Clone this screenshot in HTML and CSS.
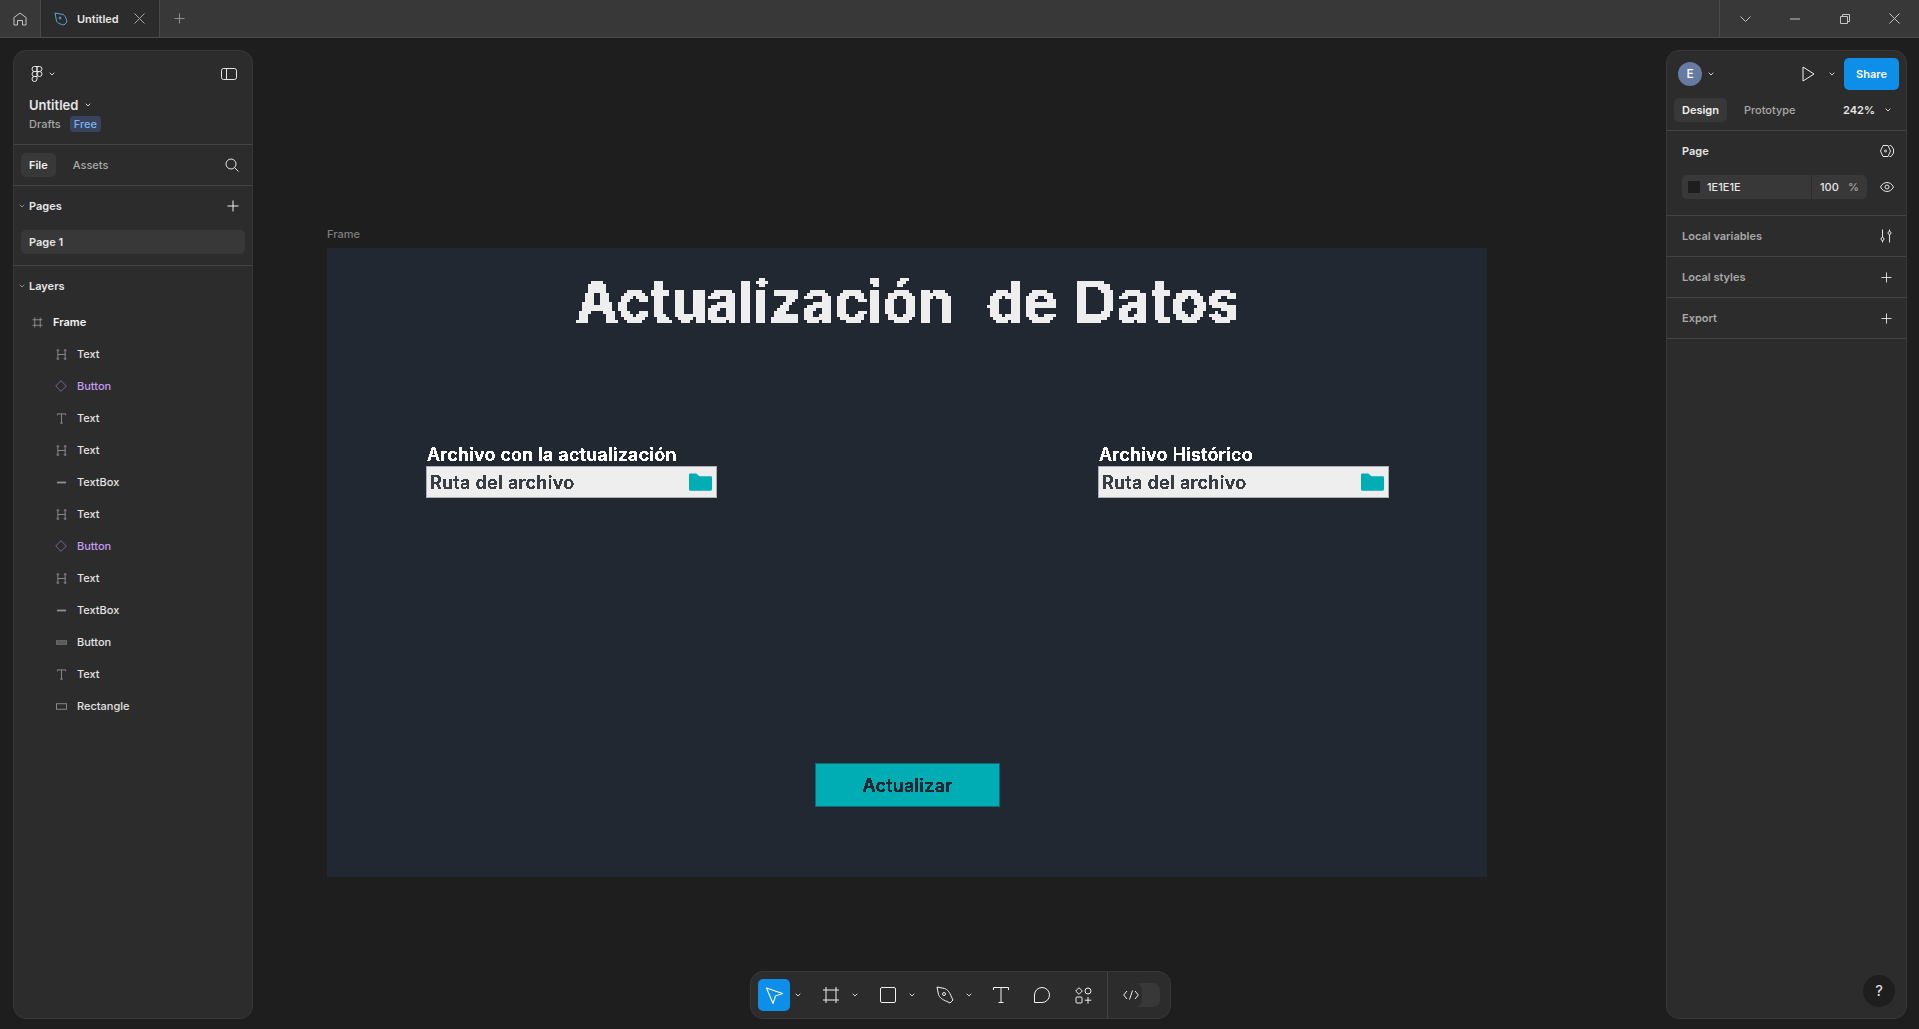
FILE: index.html
```html
<!DOCTYPE html>
<html lang="en">
<head>
    <meta charset="UTF-8">
    <meta name="viewport" content="width=device-width, initial-scale=1.0">
    <title>Untitled - Figma</title>
    <link rel="stylesheet" href="styles.css">
</head>
<body>
    <!-- icon sprite and the pixel font filters -->
    <svg class="sprite" width="0" height="0">
        <defs>
            <filter id="pixel-big" x="0" y="0" width="100%" height="100%" color-interpolation-filters="sRGB">
                <feFlood x="1" y="1" width="1" height="1" flood-color="#000"/>
                <feComposite width="3" height="3"/>
                <feTile result="grid"/>
                <feComposite in="SourceGraphic" in2="grid" operator="in"/>
                <feMorphology operator="dilate" radius="1"/>
                <feComponentTransfer>
                    <feFuncA type="discrete" tableValues="0 1 1 1"/>
                </feComponentTransfer>
            </filter>
            <filter id="pixel-small" x="0" y="0" width="100%" height="100%" color-interpolation-filters="sRGB">
                <feComponentTransfer>
                    <feFuncA type="discrete" tableValues="0 1 1 1"/>
                </feComponentTransfer>
            </filter>
            <symbol id="caret" viewBox="0 0 6 4"><path d="M.7.7 3 3l2.3-2.3" fill="none" stroke="currentColor"/></symbol>
            <symbol id="plus" viewBox="0 0 12 12"><path d="M6 .5v11M.5 6h11" fill="none" stroke="currentColor"/></symbol>
            <symbol id="i-frame" viewBox="0 0 12 12"><path d="M3 .5v11M9 .5v11M.5 3h11M.5 9h11" fill="none" stroke="currentColor"/></symbol>
            <symbol id="i-auto" viewBox="0 0 12 12" fill="none" stroke="currentColor"><path d="M2 2.500v7M10 2.500v7M2 6h8"/><circle cx="2" cy="1.500" r="1"/><circle cx="10" cy="1.500" r="1"/><circle cx="2" cy="10.500" r="1"/><circle cx="10" cy="10.500" r="1"/></symbol>
            <symbol id="i-comp" viewBox="0 0 12 12"><path d="M6 .7 11.300 6 6 11.300.7 6z" fill="none" stroke="currentColor"/></symbol>
            <symbol id="i-text" viewBox="0 0 12 12"><path d="M1.500 2.500v-1.500h9v1.500M6 1v10M4.500 11h3" fill="none" stroke="currentColor"/></symbol>
            <symbol id="i-line" viewBox="0 0 12 12"><path d="M1 5h10v2H1z" fill="currentColor"/></symbol>
            <symbol id="i-btn" viewBox="0 0 12 12"><rect x=".5" y="4" width="11" height="4" fill="#5a5a5a" stroke="#6e6e6e"/></symbol>
            <symbol id="i-rect" viewBox="0 0 12 12"><rect x=".5" y="3" width="11" height="6" fill="none" stroke="currentColor"/></symbol>
        </defs>
    </svg>

    <header class="topbar">
        <div class="home-tab">
            <svg width="14" height="14" viewBox="0 0 14 14" fill="none" stroke="currentColor"><path d="M1 13V5.500L7 1l6 4.500V13H9.500V8.500h-5V13z" stroke-linejoin="round"/></svg>
        </div>
        <div class="file-tab">
            <svg class="nib" width="14" height="14" viewBox="0 0 14 14" fill="none" stroke="currentColor"><path d="M1 1 9 2.500c2 1 3 3 4 7.500l-3 3c-4.500-1-6.500-2-7.500-4z" stroke-linejoin="round"/><circle cx="6" cy="6" r="1"/></svg>
            <span class="tab-name">Untitled</span>
            <svg class="tab-close" width="11" height="11" viewBox="0 0 11 11"><path d="M.5.5l10 10M10.500.5l-10 10" stroke="currentColor" fill="none"/></svg>
        </div>
        <div class="new-tab"><svg width="11" height="11"><use href="#plus"/></svg></div>
        <div class="window-btns">
            <div class="win-btn"><svg width="11" height="6" viewBox="0 0 11 6"><path d="M.5.5 5.500 5.500l5-5" fill="none" stroke="currentColor"/></svg></div>
            <div class="win-btn"><svg width="10" height="2" viewBox="0 0 10 2"><path d="M0 1h10" stroke="currentColor"/></svg></div>
            <div class="win-btn"><svg width="10" height="10" viewBox="0 0 10 10" fill="none" stroke="currentColor"><path d="M.5 2.500h7v7h-7zM2.500 2.500v-2h7v7h-2"/></svg></div>
            <div class="win-btn"><svg width="11" height="11" viewBox="0 0 11 11"><path d="M.5.5l10 10M10.500.5l-10 10" stroke="currentColor" fill="none"/></svg></div>
        </div>
    </header>

    <main class="workspace">
        <aside class="panel left-panel">
            <div class="file-head">
                <div class="logo-row">
                    <div class="logo">
                        <svg width="12" height="16" viewBox="0 0 12 16" fill="none" stroke="currentColor"><path d="M6 .5H3.500a2.500 2.500 0 0 0 0 5H6zM6 .5h2.500a2.500 2.500 0 0 1 0 5H6zM6 5.500H3.500a2.500 2.500 0 0 0 0 5H6z"/><circle cx="8.500" cy="8" r="2.500"/><path d="M3.500 10.500H6V13a2.500 2.500 0 1 1-2.500-2.500z"/></svg>
                        <svg class="caret" width="6" height="4"><use href="#caret"/></svg>
                    </div>
                    <svg width="16" height="12" viewBox="0 0 16 12" fill="none" stroke="currentColor"><rect x=".5" y=".5" width="15" height="11" rx="2"/><path d="M5.500.5v11"/></svg>
                </div>
                <div class="file-title">Untitled <svg class="caret" width="6" height="4"><use href="#caret"/></svg></div>
                <div class="file-meta"><span>Drafts</span><span class="badge">Free</span></div>
            </div>

            <div class="tabs-row">
                <span class="tab active">File</span>
                <span class="tab">Assets</span>
                <svg class="search" width="14" height="14" viewBox="0 0 14 14" fill="none" stroke="currentColor"><circle cx="6" cy="6" r="5"/><path d="M9.500 9.500 13.500 13.500"/></svg>
            </div>

            <section class="pages">
                <div class="section-head">
                    <svg class="fold" width="6" height="4"><use href="#caret"/></svg>
                    <span>Pages</span>
                    <svg class="head-plus" width="12" height="12"><use href="#plus"/></svg>
                </div>
                <div class="page-row">Page 1</div>
            </section>

            <section class="layers">
                <div class="section-head">
                    <svg class="fold" width="6" height="4"><use href="#caret"/></svg>
                    <span>Layers</span>
                </div>
                <ul class="layer-list">
                    <li class="layer root"><svg width="11" height="11"><use href="#i-frame"/></svg><span>Frame</span></li>
                    <li class="layer"><svg width="11" height="11"><use href="#i-auto"/></svg><span>Text</span></li>
                    <li class="layer purple"><svg width="12" height="12"><use href="#i-comp"/></svg><span>Button</span></li>
                    <li class="layer"><svg width="11" height="11"><use href="#i-text"/></svg><span>Text</span></li>
                    <li class="layer"><svg width="11" height="11"><use href="#i-auto"/></svg><span>Text</span></li>
                    <li class="layer"><svg width="11" height="11"><use href="#i-line"/></svg><span>TextBox</span></li>
                    <li class="layer"><svg width="11" height="11"><use href="#i-auto"/></svg><span>Text</span></li>
                    <li class="layer purple"><svg width="12" height="12"><use href="#i-comp"/></svg><span>Button</span></li>
                    <li class="layer"><svg width="11" height="11"><use href="#i-auto"/></svg><span>Text</span></li>
                    <li class="layer"><svg width="11" height="11"><use href="#i-line"/></svg><span>TextBox</span></li>
                    <li class="layer"><svg width="11" height="11"><use href="#i-btn"/></svg><span>Button</span></li>
                    <li class="layer"><svg width="11" height="11"><use href="#i-text"/></svg><span>Text</span></li>
                    <li class="layer"><svg width="11" height="11"><use href="#i-rect"/></svg><span>Rectangle</span></li>
                </ul>
            </section>
        </aside>

        <div class="canvas">
            <div class="frame-label">Frame</div>
            <div class="frame">
                <h1 class="frame-title"><span class="title-word">Actualización</span>&nbsp; de Datos</h1>
                <div class="fields">
                    <div class="field">
                        <label class="field-label">Archivo con la actualización</label>
                        <div class="field-box">
                            <span class="field-text">Ruta del archivo</span>
                            <svg width="23" height="18" viewBox="0 0 24 18"><path d="M0 1.500C0 .500.500 0 1.500 0h6L11 3h11.500c1 0 1.500.5 1.500 1.500v12c0 1-.5 1.500-1.500 1.500h-21C.5 18 0 17.500 0 16.500z" fill="#00adb5"/></svg>
                        </div>
                    </div>
                    <div class="field">
                        <label class="field-label">Archivo Histórico</label>
                        <div class="field-box">
                            <span class="field-text">Ruta del archivo</span>
                            <svg width="23" height="18" viewBox="0 0 24 18"><path d="M0 1.500C0 .500.500 0 1.500 0h6L11 3h11.500c1 0 1.500.5 1.500 1.500v12c0 1-.5 1.500-1.500 1.500h-21C.5 18 0 17.500 0 16.500z" fill="#00adb5"/></svg>
                        </div>
                    </div>
                </div>
                <div class="update-btn"><span>Actualizar</span></div>
            </div>
        </div>

        <aside class="panel right-panel">
            <div class="share-row">
                <div class="avatar">E</div>
                <svg class="caret avatar-caret" width="6" height="4"><use href="#caret"/></svg>
                <svg class="play" width="13" height="16" viewBox="0 0 13 16"><path d="M1 1 12 8 1 15z" fill="none" stroke="currentColor" stroke-linejoin="round"/></svg>
                <svg class="caret play-caret" width="6" height="4"><use href="#caret"/></svg>
                <div class="share-btn">Share</div>
            </div>
            <div class="design-row">
                <span class="tab active">Design</span>
                <span class="tab">Prototype</span>
                <span class="zoom-value">242%</span>
                <svg class="caret" width="6" height="4"><use href="#caret"/></svg>
            </div>
            <section class="page-section">
                <div class="prop-head">
                    <span>Page</span>
                    <svg width="14" height="12" viewBox="0 0 14 12" fill="none" stroke="currentColor"><path d="M3 .5h5l2.500 5.500L8 11.500H3L.5 6z"/><path d="M9.500.5H11L13.500 4v4L11 11.500H9.500"/><circle cx="5.500" cy="6" r="1"/></svg>
                </div>
                <div class="fill-row">
                    <div class="fill-input">
                        <div class="fill-color"><span class="swatch"></span>1E1E1E</div>
                        <div class="fill-opacity"><span>100</span><span class="pct">%</span></div>
                    </div>
                    <svg width="14" height="10" viewBox="0 0 14 10" fill="none" stroke="currentColor"><path d="M.5 5C2 2 4.500.5 7 .5S12 2 13.500 5C12 8 9.500 9.500 7 9.500S2 8 .5 5z"/><circle cx="7" cy="5" r="2"/></svg>
                </div>
            </section>
            <div class="prop-row">
                <span>Local variables</span>
                <svg width="12" height="14" viewBox="0 0 12 14" fill="none" stroke="currentColor"><path d="M2.500.5v8M9.500 5.500v8M2.500 11.500v2M9.500.5v2"/><circle cx="2.500" cy="10" r="1.500"/><circle cx="9.500" cy="4" r="1.500"/></svg>
            </div>
            <div class="prop-row">
                <span>Local styles</span>
                <svg width="11" height="11"><use href="#plus"/></svg>
            </div>
            <div class="prop-row">
                <span>Export</span>
                <svg width="11" height="11"><use href="#plus"/></svg>
            </div>
            <div class="help-btn">?</div>
        </aside>

        <nav class="toolbar">
            <div class="tool selected">
                <svg width="20" height="20" viewBox="0 0 20 20"><path d="M2.500 3 18.500 8.500 11.500 11 9 18.500z" fill="none" stroke="currentColor" stroke-linejoin="round" stroke-width="1.100"/></svg>
            </div>
            <svg class="tool-caret" width="6" height="4"><use href="#caret"/></svg>
            <div class="tool"><svg width="16" height="16" viewBox="0 0 16 16"><path d="M3 0v16M13 0v16M0 3h16M0 13h16" fill="none" stroke="currentColor"/></svg></div>
            <svg class="tool-caret" width="6" height="4"><use href="#caret"/></svg>
            <div class="tool"><svg width="16" height="16" viewBox="0 0 16 16"><rect x=".5" y=".5" width="15" height="15" rx="1.500" fill="none" stroke="currentColor"/></svg></div>
            <svg class="tool-caret" width="6" height="4"><use href="#caret"/></svg>
            <div class="tool"><svg width="18" height="18" viewBox="0 0 18 18" fill="none" stroke="currentColor"><path d="M1 1l7.500 1.500c3 1 5 3.500 7 8.500l1.500 3-3 3-3-1.500c-5-2-7.500-4-8.500-7z" stroke-linejoin="round"/><circle cx="8" cy="8" r="1.500"/></svg></div>
            <svg class="tool-caret last" width="6" height="4"><use href="#caret"/></svg>
            <div class="tool"><svg width="16" height="16" viewBox="0 0 16 16"><path d="M.5 3V.5h15V3M8 .5v15M5.500 15.500h5" fill="none" stroke="currentColor"/></svg></div>
            <div class="tool"><svg width="16" height="16" viewBox="0 0 16 16"><path d="M8 .5a7.500 7.500 0 0 1 0 15H.5V8A7.500 7.500 0 0 1 8 .5z" fill="none" stroke="currentColor"/></svg></div>
            <div class="tool"><svg width="17" height="17" viewBox="0 0 17 17" fill="none" stroke="currentColor"><path d="M4 .7 7.300 4 4 7.300.7 4z"/><circle cx="13" cy="4" r="3"/><rect x="1" y="10" width="6" height="6" rx="1"/><path d="M13 10v6.500M9.800 13.200h6.500"/></svg></div>
            <div class="dev-section">
                <div class="dev-toggle">
                    <div class="dev-knob"><svg width="16" height="10" viewBox="0 0 16 10"><path d="M4 1 .7 5 4 9M12 1l3.300 4L12 9M9.500.5l-3 9" fill="none" stroke="currentColor"/></svg></div>
                </div>
            </div>
        </nav>
    </main>
</body>
</html>
```

FILE: styles.css
```css
* {
    box-sizing: border-box;
}
html, body {
    height: 100%;
}
body {
    margin: 0;
    display: flex;
    flex-direction: column;
    overflow: hidden;
    background: #1e1e1e;
    color: #e6e6e6;
    font-family: Inter, "Liberation Sans", sans-serif;
    font-size: 11px;
    font-weight: 500;
}
svg {
    display: block;
    flex: none;
}
.sprite {
    position: absolute;
}
.caret {
    color: #d0d0d0;
}

/* top bar */
.topbar {
    display: flex;
    height: 38px;
    flex: none;
    background: #383838;
    border-bottom: 1px solid #4a4a4a;
    color: #c4c4c4;
}
.home-tab {
    width: 41px;
    display: flex;
    align-items: center;
    justify-content: center;
    border-right: 1px solid #4a4a4a;
}
.file-tab {
    width: 119px;
    display: flex;
    align-items: center;
    padding: 0 14px 0 13px;
    background: #2c2c2c;
    border-right: 1px solid #4a4a4a;
}
.nib {
    color: #5aa5dd;
}
.tab-name {
    margin-left: 9px;
    color: #e6e6e6;
    font-weight: 600;
}
.tab-close {
    margin-left: auto;
    color: #a8a8a8;
}
.new-tab {
    width: 38px;
    display: flex;
    align-items: center;
    justify-content: center;
    color: #969696;
}
.window-btns {
    margin-left: auto;
    display: flex;
    width: 200px;
    padding-left: 1px;
    border-left: 1px solid #4a4a4a;
}
.win-btn {
    flex: 1;
    display: flex;
    align-items: center;
    justify-content: center;
}

/* workspace */
.workspace {
    position: relative;
    flex: 1;
    display: flex;
    padding: 12px 12px 10px 13px;
    min-height: 0;
}
.panel {
    flex: none;
    display: flex;
    flex-direction: column;
    background: #2c2c2c;
    border: 1px solid #383838;
    border-radius: 13px;
    overflow: hidden;
}
.left-panel {
    width: 240px;
}
.right-panel {
    width: 241px;
}

/* left panel */
.file-head {
    height: 94px;
    padding: 14px 15px 0;
    border-bottom: 1px solid #444;
}
.logo-row {
    display: flex;
    align-items: center;
    justify-content: space-between;
    height: 18px;
}
.logo {
    display: flex;
    align-items: center;
    gap: 6px;
    padding-left: 2px;
}
.file-title {
    display: flex;
    align-items: center;
    gap: 7px;
    margin-top: 14px;
    height: 16px;
    font-size: 13px;
    font-weight: 600;
}
.file-meta {
    display: flex;
    align-items: center;
    gap: 9px;
    margin-top: 3px;
    color: #a6a6a6;
}
.badge {
    padding: 1px 4px;
    height: 16px;
    line-height: 14px;
    border-radius: 4px;
    background: #394360;
    color: #7cb3ee;
}
.tabs-row {
    display: flex;
    align-items: center;
    height: 41px;
    padding: 0 13px 0 7px;
    border-bottom: 1px solid #444;
}
.tab {
    height: 24px;
    line-height: 24px;
    padding: 0 8px;
    border-radius: 5px;
    color: #a8a8a8;
}
.tab.active {
    background: #383838;
    color: #f0f0f0;
    font-weight: 600;
}
.tabs-row .tab + .tab {
    margin-left: 9px;
}
.search {
    margin-left: auto;
}
.pages {
    height: 80px;
    padding: 8px 0 0;
    border-bottom: 1px solid #444;
}
.section-head {
    position: relative;
    display: flex;
    align-items: center;
    justify-content: space-between;
    height: 24px;
    padding: 0 13px 0 15px;
    font-weight: 600;
}
.fold {
    position: absolute;
    left: 5px;
    top: 10px;
    color: #8c8c8c;
}
.head-plus {
    color: #f0f0f0;
}
.page-row {
    height: 24px;
    margin: 12px 7px 0;
    padding: 0 8px;
    line-height: 24px;
    border-radius: 5px;
    background: #383838;
    font-weight: 600;
}
.layers {
    padding-top: 8px;
}
.layer-list {
    list-style: none;
    margin: 8px 0 0;
    padding: 0;
}
.layer {
    display: flex;
    align-items: center;
    height: 32px;
    padding-left: 42px;
    color: #8f8f8f;
}
.layer span {
    margin-left: 10px;
    color: #e2e2e2;
}
.layer.root {
    padding-left: 18px;
    font-weight: 600;
}
.layer.root span {
    color: #f4f4f4;
}
.layer.purple {
    padding-left: 41px;
    color: #7a5fa6;
}
.layer.purple span {
    color: #c39bec;
}

/* canvas with the artboard */
.canvas {
    flex: 1;
    min-width: 0;
    padding: 177px 0 0 74px;
}
.frame-label {
    height: 14px;
    line-height: 14px;
    margin-bottom: 7px;
    color: #7f7f7f;
}
.frame {
    width: 1160px;
    height: 629px;
    padding: 18px 98px 0 99px;
    background: #222831;
}
.frame-title {
    margin: 0;
    height: 70px;
    line-height: 70px;
    text-align: center;
    color: #eeeeee;
    font-size: 58px;
    font-weight: 700;
    letter-spacing: 0.1px;
    word-spacing: 3px;
    white-space: nowrap;
    filter: url(#pixel-big);
}
.title-word {
    letter-spacing: -0.75px;
}
.fields {
    display: flex;
    justify-content: space-between;
    margin-top: 111px;
}
.field {
    width: 291px;
}
.field-label {
    display: block;
    height: 19px;
    line-height: 16px;
    padding-left: 1px;
    color: #fff;
    font-size: 18px;
    font-weight: 600;
    letter-spacing: 0.2px;
    white-space: nowrap;
    filter: url(#pixel-small);
}
.field-box {
    display: flex;
    align-items: center;
    justify-content: space-between;
    height: 32px;
    padding: 0 4px 0 3px;
    background: #eeeeee;
    border: 1px solid #aab0b6;
}
.field-text {
    color: #393e46;
    font-size: 18px;
    font-weight: 600;
    letter-spacing: 0.3px;
    filter: url(#pixel-small);
}
.update-btn {
    display: flex;
    align-items: center;
    justify-content: center;
    width: 185px;
    height: 44px;
    margin: 265px auto 0;
    background: #00adb5;
    border: 1px solid #0d6a72;
    color: #222831;
    font-size: 18px;
    font-weight: 600;
    letter-spacing: 0.2px;
}
.update-btn span {
    filter: url(#pixel-small);
}

/* right panel */
.share-row {
    display: flex;
    align-items: center;
    height: 39px;
    padding: 7px 7px 0 8px;
}
.avatar {
    width: 24px;
    height: 24px;
    margin-left: 3px;
    border-radius: 50%;
    background: #667aa3;
    color: #fff;
    font-size: 12px;
    line-height: 24px;
    text-align: center;
}
.avatar-caret {
    margin-left: 6px;
}
.play {
    margin-left: 88px;
    color: #f0f0f0;
}
.play-caret {
    margin-left: 14px;
}
.share-btn {
    margin-left: 9px;
    width: 55px;
    height: 32px;
    line-height: 32px;
    text-align: center;
    border-radius: 5px;
    background: #0d8ee9;
    color: #fff;
    font-weight: 600;
}
.design-row {
    display: flex;
    align-items: center;
    height: 41px;
    padding: 0 15px 0 7px;
    border-bottom: 1px solid #444;
}
.design-row .tab + .tab {
    margin-left: 9px;
}
.zoom-value {
    margin-left: auto;
    margin-right: 10px;
    font-weight: 600;
}
.page-section {
    height: 85px;
    padding: 8px 12px 0 15px;
    border-bottom: 1px solid #444;
}
.prop-head {
    display: flex;
    align-items: center;
    justify-content: space-between;
    height: 24px;
    font-weight: 600;
}
.fill-row {
    display: flex;
    align-items: center;
    justify-content: space-between;
    margin-top: 12px;
}
.fill-input {
    display: flex;
    width: 185px;
    height: 24px;
    line-height: 24px;
    background: #383838;
    border-radius: 5px;
}
.fill-color {
    display: flex;
    align-items: center;
    gap: 7px;
    width: 130px;
    padding-left: 6px;
    border-right: 1px solid #2c2c2c;
}
.swatch {
    width: 12px;
    height: 12px;
    background: #1e1e1e;
}
.fill-opacity {
    display: flex;
    flex: 1;
    justify-content: space-between;
    padding: 0 8px;
}
.pct {
    color: #a8a8a8;
}
.prop-row {
    display: flex;
    align-items: center;
    justify-content: space-between;
    height: 41px;
    padding: 0 14px 0 15px;
    border-bottom: 1px solid #444;
    color: #a8a8a8;
    font-weight: 600;
}
.prop-row svg {
    color: #e6e6e6;
}
.help-btn {
    align-self: flex-end;
    width: 32px;
    height: 32px;
    margin: auto 11px 11px 0;
    line-height: 32px;
    text-align: center;
    border-radius: 50%;
    background: #1e1e1e;
    color: #e6e6e6;
    font-size: 15px;
    font-weight: 400;
}

/* bottom toolbar */
.toolbar {
    position: absolute;
    left: 750px;
    bottom: 10px;
    display: flex;
    align-items: center;
    width: 421px;
    height: 48px;
    padding-left: 7px;
    background: #2c2c2c;
    border: 1px solid #383838;
    border-radius: 13px;
    color: #f0f0f0;
}
.tool {
    display: flex;
    align-items: center;
    justify-content: center;
    width: 32px;
    height: 32px;
    border-radius: 5px;
}
.tool + .tool {
    margin-left: 9px;
}
.tool.selected {
    background: #0d8ee9;
    color: #fff;
}
.tool-caret {
    margin: 0 14px 0 5px;
    color: #d0d0d0;
}
.tool-caret.last {
    margin-right: 13px;
}
.dev-section {
    display: flex;
    align-items: center;
    height: 46px;
    margin-left: 8px;
    padding-left: 12px;
    border-left: 1px solid #444;
}
.dev-toggle {
    width: 40px;
    height: 24px;
    border-radius: 7px;
    background: #383838;
}
.dev-knob {
    display: flex;
    align-items: center;
    justify-content: center;
    width: 22px;
    height: 24px;
    border-radius: 7px;
    background: #2c2c2c;
}
```
